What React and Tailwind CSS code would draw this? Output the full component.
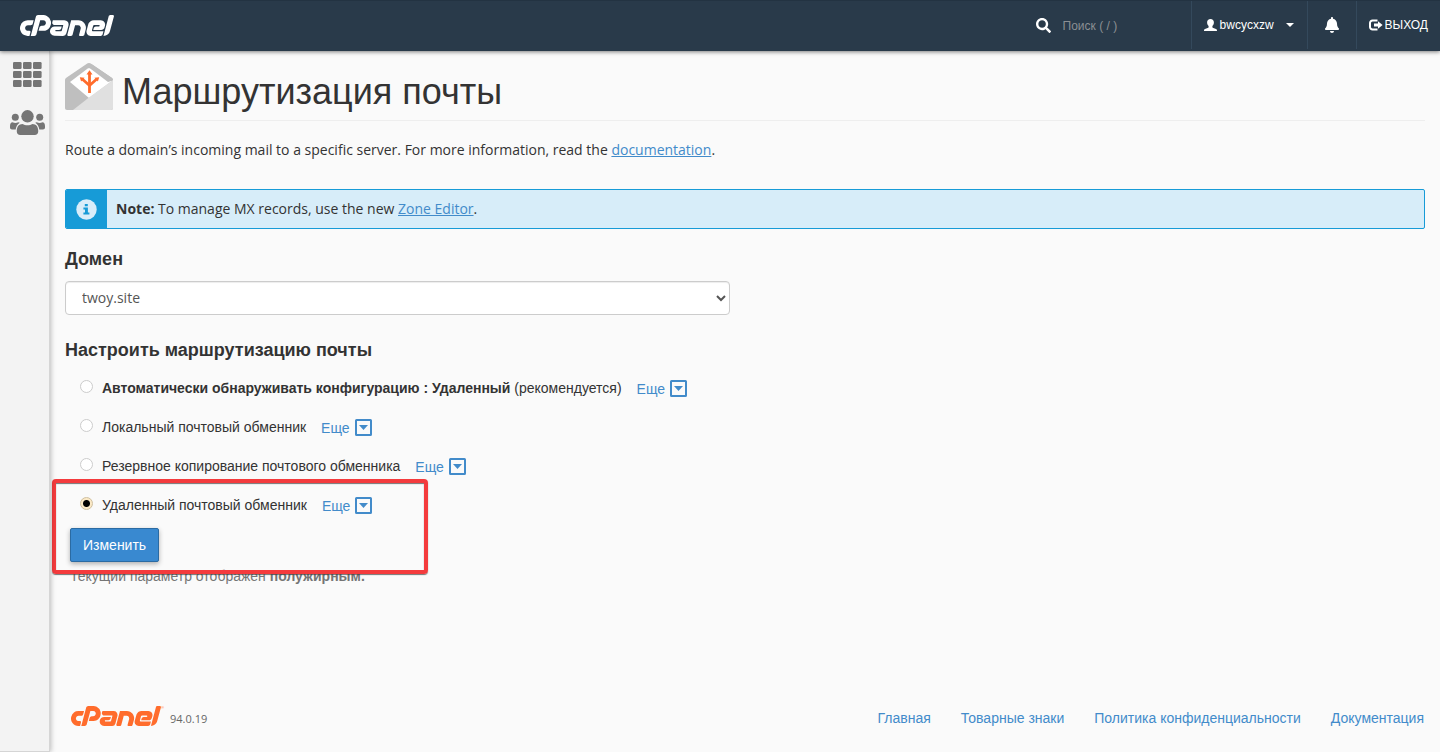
import { SiCpanel } from "react-icons/si";
import { FaSearch, FaBell } from "react-icons/fa";

function UserGlyph() {
  return (
    <svg viewBox="0 0 13 12" className="h-3 w-[13px]" fill="currentColor" aria-hidden="true">
      <path d="M6.500 0C8.600 0 9.900 1.300 9.900 3.200c0 1.700-.6 2.900-1.500 3.700v1c0 .6.300.9 1 1.200l2.600.9c.8.300 1 .8 1 2H0c0-1.200.2-1.700 1-2l2.600-.9c.7-.3 1-.6 1-1.200v-1C3.700 6.100 3.100 4.900 3.100 3.200 3.100 1.300 4.400 0 6.500 0z" />
    </svg>
  );
}

function LogoutGlyph() {
  return (
    <svg viewBox="0 0 14 12" className="h-3 w-[14px]" aria-hidden="true">
      <path d="M8.500 1.500H3.500A2.500 2.500 0 0 0 1 4v4a2.500 2.500 0 0 0 2.500 2.500h5" fill="none" stroke="currentColor" strokeWidth="2" />
      <path d="M9 2.200L13.600 6 9 9.800V7.500H5v-3h4z" fill="currentColor" />
    </svg>
  );
}

function GridGlyph() {
  const cells = [0, 10, 20];
  return (
    <svg viewBox="0 0 29 25" className="h-[25px] w-[29px]" fill="#757575" aria-hidden="true">
      {cells.map((x) =>
        [0, 9, 18].map((y) => <rect key={`${x}-${y}`} x={x} y={y} width="8.600" height="7" rx="1.200" />)
      )}
    </svg>
  );
}

function UsersGlyph() {
  return (
    <svg viewBox="0 0 35 25" className="h-[25px] w-[35px]" fill="#757575" aria-hidden="true">
      <circle cx="17.500" cy="6.300" r="6.200" />
      <circle cx="5.300" cy="7.300" r="3.500" />
      <circle cx="29.700" cy="7.300" r="3.500" />
      <path d="M12.500 14c1.500.9 3 1.300 5 1.300s3.500-.4 5-1.300c3.500 0 5.700 2.800 5.700 6.500v1.300c0 2-1.400 3.200-3.400 3.200H10.200c-2 0-3.400-1.200-3.400-3.200v-1.300c0-3.700 2.200-6.500 5.700-6.500z" />
      <path d="M2.500 12.200c2 .9 4 .9 5.700 0 .6 0 1.100.2 1.500.5C7.500 14.300 6 16.500 5.700 19.500H2c-1.200 0-2-.8-2-2v-1.500c0-2.200 1-3.800 2.500-3.800z" />
      <path d="M32.500 12.200c-2 .9-4 .9-5.700 0-.6 0-1.100.2-1.500.5 2.200 1.600 3.700 3.800 4 6.800H33c1.200 0 2-.8 2-2v-1.500c0-2.200-1-3.800-2.500-3.800z" />
    </svg>
  );
}

function EnvelopeIcon() {
  return (
    <svg viewBox="0 0 48 47" className="h-[47px] w-12 shrink-0" aria-hidden="true">
      <path d="M0 17.500c0-1.200.4-2 1.300-2.700L21.500 1c1.600-1.200 3.400-1.200 5 0l20.200 13.800c.9.700 1.300 1.500 1.300 2.700V45c0 1.200-.8 2-2 2H2c-1.200 0-2-.8-2-2z" fill="#bfbfbf" />
      <path d="M5 19L22.700 5.600c.9-.6 1.700-.6 2.600 0L47 18 24 35z" fill="#fff" />
      <path d="M25.300 5.600L43 19l5-1.500c0-1.200-.4-2-1.300-2.700L26.500 1z" fill="#bfbfbf" />
      <path d="M24 34.500L48 17v28c0 1.200-.8 2-2 2H8z" fill="#e0e0e0" />
      <g fill="none" stroke="#ff6c2c" strokeWidth="2.800">
        <path d="M24.500 30V10" />
        <path d="M24.500 22.500l-7-6.300M24.500 22.500l7-6.300" />
      </g>
      <path d="M24.500 7.200l3 4.200h-6zM14.800 14.200l4.800.6-3.500 3.600zM34.200 14.200l-4.800.6 3.500 3.600z" fill="#ff6c2c" />
    </svg>
  );
}

function InfoGlyph() {
  return (
    <svg viewBox="0 0 21 21" className="h-[21px] w-[21px]" aria-hidden="true">
      <circle cx="10.500" cy="10.500" r="10.200" fill="#d9edf9" />
      <path d="M8.800 5h3v2.200h-3zM7.400 8.500h4.500v5h1.500v1.900h-6v-1.900h1.600v-3.100H7.400z" fill="#179bd7" />
    </svg>
  );
}

function ExpandGlyph() {
  return (
    <svg viewBox="0 0 17 17" className="h-[17px] w-[17px]" aria-hidden="true">
      <rect x="1" y="1" width="15" height="15" rx="0.500" fill="none" stroke="#428bca" strokeWidth="2" />
      <path d="M4 6h9l-4.500 5z" fill="#428bca" />
    </svg>
  );
}

const options = [
  { id: "auto", label: <><b>Автоматически обнаруживать конфигурацию : Удаленный</b> (рекомендуется)</> },
  { id: "local", label: "Локальный почтовый обменник" },
  { id: "secondary", label: "Резервное копирование почтового обменника" },
  { id: "remote", label: "Удаленный почтовый обменник" },
];

const footerLinks = ["Главная", "Товарные знаки", "Политика конфиденциальности", "Документация"];

function Header() {
  return (
    <header className="relative z-20 flex h-[51px] items-stretch justify-between border-t border-[#233342] bg-[#293a4a] pb-[2px] pl-5 text-white shadow-[0_1px_4px_rgba(0,0,0,0.5)]">
      <a href="#home" aria-label="cPanel" className="flex items-center">
        <SiCpanel viewBox="0 9.350 24 5.300" className="h-[21px] w-[94px]" />
      </a>
      <div className="flex items-stretch text-xs">
        <label className="flex items-center gap-3">
          <FaSearch className="h-[15px] w-[15px]" aria-hidden="true" />
          <input
            type="search"
            aria-label="Поиск"
            placeholder="Поиск ( / )"
            className="w-32 bg-transparent pt-px outline-none placeholder:text-[#8b8f93]"
          />
        </label>
        <button type="button" className="flex w-[116px] items-center border-l border-[#34495c] pl-3">
          <UserGlyph />
          <span className="ml-[3px]">bwcycxzw</span>
          <span className="ml-3 border-x-4 border-t-4 border-x-transparent border-t-white" />
        </button>
        <button type="button" aria-label="Уведомления" className="flex w-[49px] items-center justify-center border-l border-[#34495c]">
          <FaBell className="h-4 w-4" />
        </button>
        <a href="#logout" className="flex items-center gap-[2px] border-l border-[#34495c] px-3">
          <LogoutGlyph />
          ВЫХОД
        </a>
      </div>
    </header>
  );
}

export default function App() {
  return (
    <div className="flex min-h-screen flex-col bg-[#fafafa] font-['Liberation_Sans',Arial,sans-serif] text-sm text-[#333]">
      <Header />
      <div className="flex flex-1">
        <nav className="z-10 flex w-[50px] shrink-0 flex-col items-center gap-[23px] border-r border-b border-[#d5d5d5] bg-[#f3f3f3] pt-[11px] pl-[5px] shadow-[1px_0_5px_rgba(0,0,0,0.25)]">
          <a href="#tools" aria-label="Инструменты"><GridGlyph /></a>
          <a href="#users" aria-label="Пользователи"><UsersGlyph /></a>
        </nav>
        <div className="flex min-w-0 flex-1 flex-col px-[15px]">
          <main className="flex-1">
            <h1 className="flex h-[70px] items-start gap-[9px] border-b border-[#eee] pt-3 text-4xl">
              <EnvelopeIcon />
              <span className="pt-[9px]">Маршрутизация почты</span>
            </h1>
            <p className="mt-[19px] font-['Open_Sans',sans-serif] leading-5">
              Route a domain’s incoming mail to a specific server. For more information, read the{" "}
              <a href="#documentation" className="text-[#428bca] underline">documentation</a>.
            </p>
            <div className="mt-[29px] flex h-10 overflow-hidden rounded-xs border border-[#179bd7] bg-[#d7edf9] font-['Open_Sans',sans-serif]">
              <div className="flex w-[41px] items-center justify-center bg-[#179bd7]"><InfoGlyph /></div>
              <p className="self-center pl-[9px] leading-5">
                <b>Note:</b> To manage MX records, use the new{" "}
                <a href="#zone" className="text-[#428bca] underline">Zone Editor</a>.
              </p>
            </div>
            <h2 className="mt-5 text-lg leading-5 font-bold"><label htmlFor="domain">Домен</label></h2>
            <select
              id="domain"
              className="mt-3 block h-[34px] w-[calc(50%-15px)] rounded border border-[#ccc] bg-white px-3 pb-[2px] font-['Open_Sans',sans-serif] text-[#555] shadow-[inset_0_1px_1px_rgba(0,0,0,0.075)]"
            >
              <option>twoy.site</option>
            </select>
            <form className="relative" onSubmit={(e) => e.preventDefault()}>
              <fieldset>
                <legend className="pt-[25px] text-lg leading-5 font-bold">Настроить маршрутизацию почты</legend>
                <div className="flex flex-col gap-[19px] pt-[18px] pl-[15px]">
                  {options.map((o) => (
                    <div key={o.id} className="flex h-5 items-center">
                      <input
                        type="radio"
                        name="routing"
                        id={o.id}
                        defaultChecked={o.id === "remote"}
                        className="mb-[3px] h-[13px] w-[13px] appearance-none rounded-full border border-[#ccc] bg-white checked:border-[#cfbf9f] checked:bg-[radial-gradient(circle,#000_3px,#fbe9c6_4px)]"
                      />
                      <label htmlFor={o.id} className="ml-[9px]">{o.label}</label>
                      <a href={`#${o.id}-more`} className="ml-[15px] flex items-center gap-[5px] text-[#428bca]">
                        <span className="pt-[2px]">Еще</span>
                        <ExpandGlyph />
                      </a>
                    </div>
                  ))}
                </div>
              </fieldset>
              <button
                type="submit"
                className="mt-[13px] ml-[5px] block h-[34px] rounded-xs border border-[#2b6ba3] bg-[#3989d0] px-3 text-white shadow-[0_2px_5px_rgba(0,0,0,0.3)]"
              >
                Изменить
              </button>
              <p className="mt-1 pl-[5px] leading-5 text-[#757575]">
                Текущий параметр отображен <b>полужирным.</b>
              </p>
              <div className="pointer-events-none absolute -left-[13px] top-[164px] h-[95px] w-[376px] rounded-sm border-4 border-[#f43b3d] shadow-[0_1px_1px_rgba(60,60,60,0.7),inset_0_1px_1px_rgba(60,60,60,0.7)]" />
            </form>
          </main>
          <footer className="flex h-[68px] items-center justify-between">
            <div className="flex items-center pb-1 pl-[6px]">
              <SiCpanel viewBox="0 9.350 24 5.300" className="h-5 w-[90px] text-[#ff6c2c]" aria-label="cPanel" />
              <span className="w-[9px] self-start text-[4px] leading-[6px] text-[#ff6c2c]">®</span>
              <span className="pt-[6px] font-['Open_Sans',sans-serif] text-[11px] text-[#666]">94.0.19</span>
            </div>
            <nav className="flex gap-[30px] pr-px text-[#428bca]">
              {footerLinks.map((t) => <a key={t} href="#footer">{t}</a>)}
            </nav>
          </footer>
        </div>
      </div>
    </div>
  );
}
